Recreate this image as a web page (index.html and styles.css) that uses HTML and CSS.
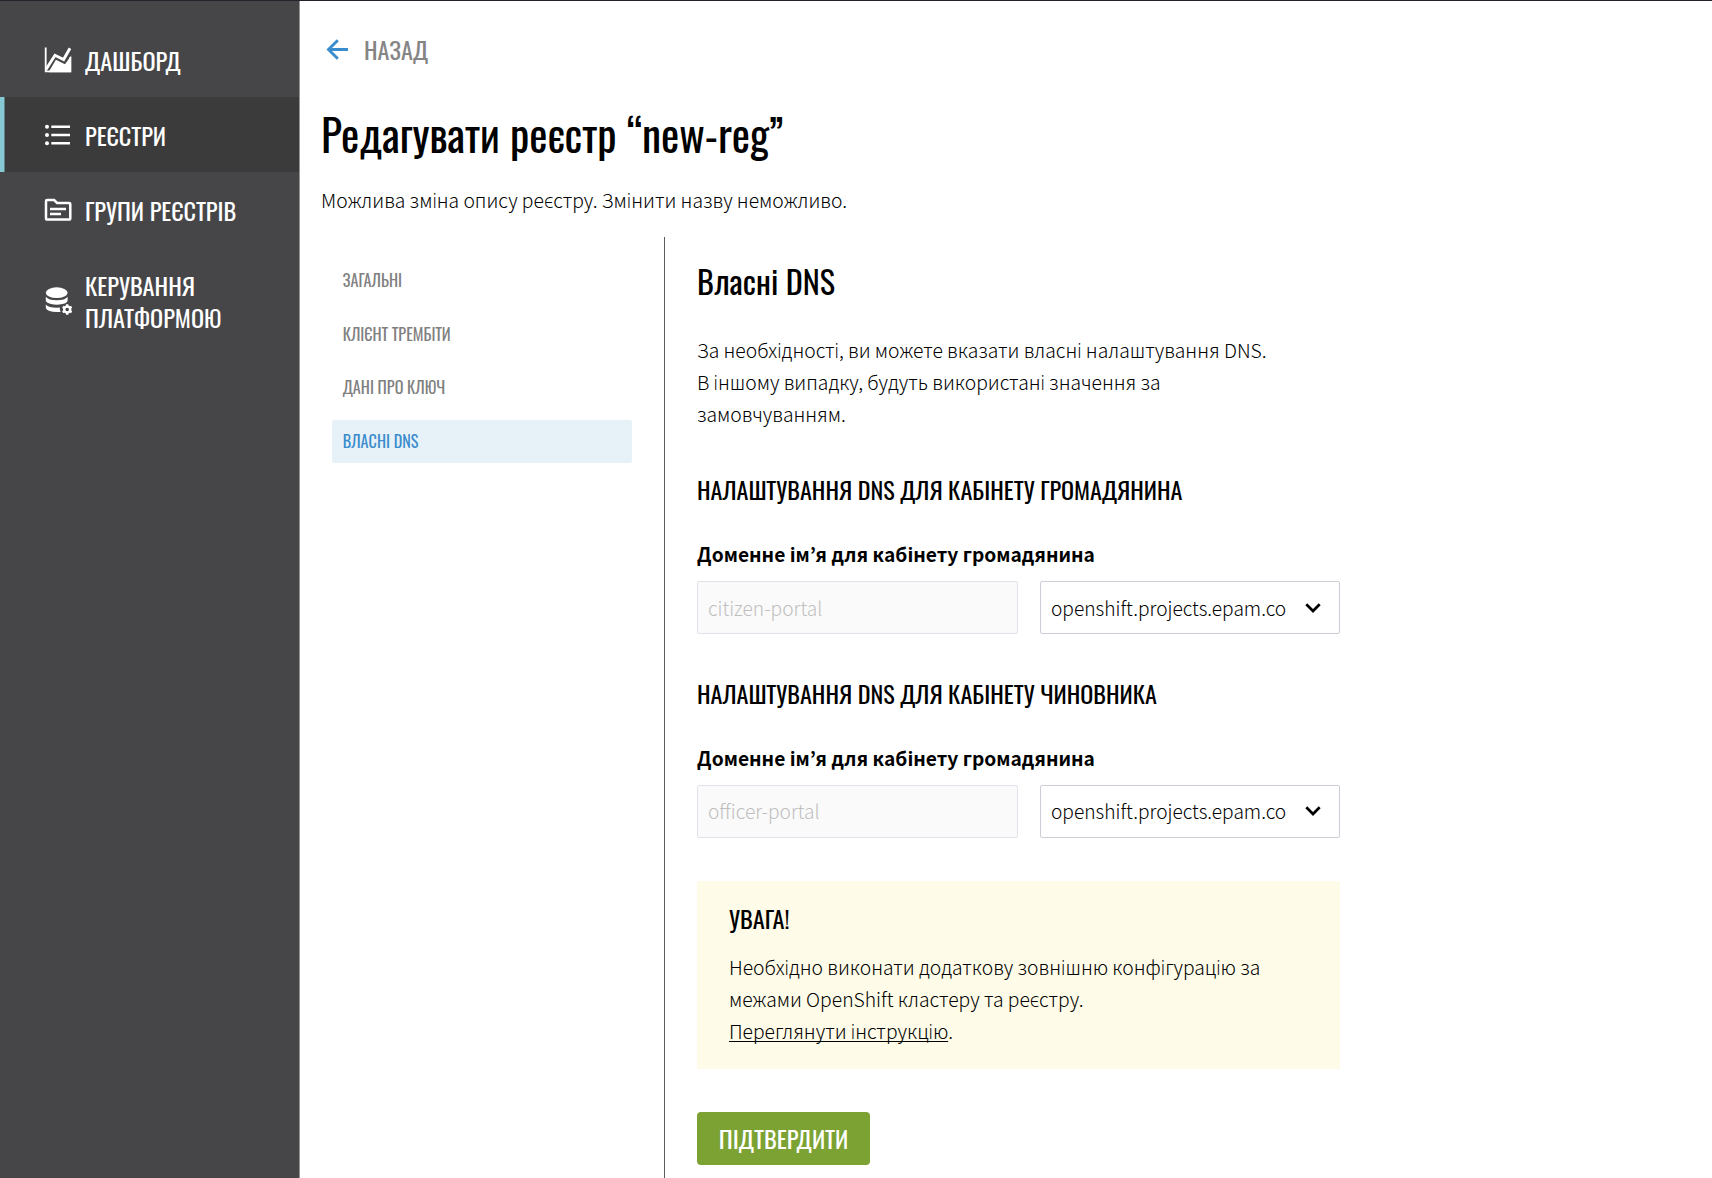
FILE: index.html
```html
<!DOCTYPE html>
<html lang="uk">
<head>
<meta charset="utf-8">
<title>Редагувати реєстр</title>
<link rel="stylesheet" href="styles.css">
</head>
<body>
<div class="app">
  <nav class="sidebar">
    <a class="nav-item">
      <svg class="nav-icon" viewBox="0 0 28 28"><path d="M1.7 1.5V25.4H26.3V11" fill="none" stroke="#fff" stroke-width="1.8"/><path d="M2 23.6 11 9.3l8.6 4.2L26 2.2" fill="none" stroke="#fff" stroke-width="2.9"/><path d="M4.7 26 11.9 13.8l9.1 4.4L27.2 9.5V26.3H4.7z" fill="#fff"/></svg>
      <span>ДАШБОРД</span>
    </a>
    <a class="nav-item nav-item-active">
      <svg class="nav-icon" viewBox="0 0 28 28" fill="#fff"><circle cx="3" cy="5.8" r="2"/><circle cx="3" cy="14" r="2"/><circle cx="3" cy="22.2" r="2"/><path d="M7.3 4.6H26v2.4H7.3zM7.3 12.8H26v2.4H7.3zM7.3 21H26v2.4H7.3z"/></svg>
      <span>РЕЄСТРИ</span>
    </a>
    <a class="nav-item">
      <svg class="nav-icon" viewBox="0 0 28 28" fill="none" stroke="#fff" stroke-width="2.5"><path d="M2 5.2Q2 4 3.2 4h6.9l3 2.9h12Q26.3 6.9 26.3 8.1V22.2Q26.3 23.5 25 23.5H3.2Q2 23.5 2 22.2Z"/><path d="M6 13H22M6 18H17"/></svg>
      <span>ГРУПИ РЕЄСТРІВ</span>
    </a>
    <a class="nav-item">
      <svg class="nav-icon" viewBox="0 0 28 28" fill="#fff"><ellipse cx="12.7" cy="5.7" rx="10.9" ry="5.4"/><path d="M1.8 9.8Q4.5 13.3 12.7 13.3T23.6 9.8V13.5Q23.3 16 18.5 17Q12.5 18.4 7 17Q1.8 15.6 1.8 13.5ZM1.8 17.5Q5 21.2 15.8 20.6Q15.6 22.8 16.6 24.9Q9.5 25.6 4.8 23.7Q1.8 22.5 1.8 20.8Z"/><circle cx="23.2" cy="22.5" r="3" fill="none" stroke="#fff" stroke-width="2.4"/><path d="M23.2 19.5V17.3M23.2 25.5v2.2M20.6 21l-1.9-1.1M25.8 24l1.9 1.1M20.6 24l-1.9 1.1M25.8 21l1.9-1.1" stroke="#fff" stroke-width="2.4"/></svg>
      <span>КЕРУВАННЯ ПЛАТФОРМОЮ</span>
    </a>
  </nav>
  <main class="main">
    <a class="back">
      <svg class="back-icon" viewBox="0 0 24 24" fill="none" stroke="#3a8ccc" stroke-width="3"><path d="M23 12H3M12.3 2.3 2.6 12l9.7 9.7"/></svg>
      <span>НАЗАД</span>
    </a>
    <h1 class="title">Редагувати реєстр “new-reg”</h1>
    <p class="subtitle">Можлива зміна опису реєстру. Змінити назву неможливо.</p>
    <div class="columns">
      <ul class="tabs">
        <li class="tab">ЗАГАЛЬНІ</li>
        <li class="tab">КЛІЄНТ ТРЕМБІТИ</li>
        <li class="tab">ДАНІ ПРО КЛЮЧ</li>
        <li class="tab tab-active">ВЛАСНІ DNS</li>
      </ul>
      <section class="form">
        <h2 class="form-title">Власні DNS</h2>
        <p class="form-text">За необхідності, ви можете вказати власні налаштування DNS.<br>В іншому випадку, будуть використані значення за<br>замовчуванням.</p>

        <h3 class="section-title">НАЛАШТУВАННЯ DNS ДЛЯ КАБІНЕТУ ГРОМАДЯНИНА</h3>
        <div class="label">Доменне ім’я для кабінету громадянина</div>
        <div class="fields">
          <div class="input">citizen-portal</div>
          <div class="select"><span>openshift.projects.epam.co</span><svg class="chevron" viewBox="0 0 16 10"><path d="M1.3 1.3 8 8l6.7-6.7" fill="none" stroke="#000" stroke-width="2.7"/></svg></div>
        </div>

        <h3 class="section-title">НАЛАШТУВАННЯ DNS ДЛЯ КАБІНЕТУ ЧИНОВНИКА</h3>
        <div class="label">Доменне ім’я для кабінету громадянина</div>
        <div class="fields">
          <div class="input">officer-portal</div>
          <div class="select"><span>openshift.projects.epam.co</span><svg class="chevron" viewBox="0 0 16 10"><path d="M1.3 1.3 8 8l6.7-6.7" fill="none" stroke="#000" stroke-width="2.7"/></svg></div>
        </div>

        <div class="notice">
          <h3 class="notice-title">УВАГА!</h3>
          <p class="notice-text">Необхідно виконати додаткову зовнішню конфігурацію за<br>межами OpenShift кластеру та реєстру.<br><a class="link">Переглянути інструкцію</a>.</p>
        </div>
        <button class="submit">ПІДТВЕРДИТИ</button>
      </section>
    </div>
  </main>
</div>
</body>
</html>
```
FILE: styles.css
```css
* { box-sizing: border-box; }
body {
  margin: 0;
  background: #fff;
  color: #000;
  font: 300 19.3px/32.1px "Noto Sans CJK KR", "Open Sans", sans-serif;
}
h1, h2, h3, p, ul { margin: 0; padding: 0; list-style: none; }
.app {
  display: flex;
  height: 1178px;
  overflow: hidden;
  border-top: 1px solid #23242b;
}

.sidebar {
  width: 300px;
  flex: none;
  padding-top: 21px;
  border-right: 1px solid #959596;
  background: #464648;
  color: #fff;
  font: 400 24.3px/32.1px Oswald, "Open Sans", sans-serif;
}
.nav-item {
  display: flex;
  align-items: center;
  gap: 13.5px;
  min-height: 75.1px;
  padding: 22px 55px 20.8px 43.5px;
}
.nav-item-active {
  background: #3b3b3b;
  box-shadow: inset 4.5px 0 #86c9d4;
}
.nav-icon { width: 28px; height: 28px; flex: none; }

.main { flex: 1; padding-left: 21px; }
.back {
  display: flex;
  align-items: center;
  gap: 15px;
  margin-top: 32px;
  padding-left: 5px;
  color: #858585;
  font: 400 24.2px/32px Oswald, "Open Sans", sans-serif;
}
.back-icon { width: 23px; height: 23px; }
.title {
  margin-top: 39.2px;
  font: 400 43.4px/60px Oswald, "Open Sans", sans-serif;
}
.subtitle { margin-top: 19.4px; }
.columns { display: flex; margin-top: 21.3px; }
.tabs {
  width: 343.2px;
  flex: none;
  display: flex;
  flex-direction: column;
  gap: 10.8px;
  padding: 22.1px 32.2px 0 11px;
}
.tab {
  height: 42.8px;
  padding-left: 10.7px;
  border-radius: 2px;
  color: #808080;
  font: 400 16.2px/42.8px Oswald, "Open Sans", sans-serif;
}
.tab-active { background: #e7f2f8; color: #3a8ccc; }

.form {
  width: 677px;
  height: 941px;
  padding: 22.2px 0 0 31.8px;
  border-left: 1px solid #5c5c5c;
}
.form-title { font: 400 32.3px/43px Oswald, "Open Sans", sans-serif; }
.form-text { margin-top: 32px; }
.section-title {
  margin-top: 42.8px;
  font: 400 24.2px/32px Oswald, "Open Sans", sans-serif;
}
.label { margin-top: 32.6px; font-weight: 700; font-size: 19.2px; line-height: 32px; }
.fields { display: flex; justify-content: space-between; width: 643.2px; margin-top: 11px; }
.input, .select {
  display: flex;
  align-items: center;
  height: 53.5px;
  padding: 0 10px;
  border: 1px solid #cdcdd8;
  border-radius: 2px;
  font-size: 19.15px;
}
.input { width: 321.5px; background: #fafafa; border-color: #e2e2ea; color: #bfbfbf; }
.select { width: 300.2px; justify-content: space-between; padding-right: 18px; }
.chevron { width: 16px; height: 10px; }

.notice {
  width: 643.2px;
  margin-top: 42.8px;
  padding: 21.4px 32px 22px;
  background: #fefbe8;
}
.notice-title { font: 400 24.4px/32px Oswald, "Open Sans", sans-serif; }
.notice-text { margin-top: 16.3px; }
.link {
  text-decoration: underline;
  text-decoration-thickness: 1px;
  text-underline-offset: 2px;
  text-decoration-skip-ink: none;
}
.submit {
  display: block;
  width: 173px;
  height: 53.5px;
  margin-top: 43px;
  padding: 0;
  border: 0;
  border-radius: 4px;
  background: #7ba232;
  color: #fff;
  font: 400 24.4px/53.5px Oswald, "Open Sans", sans-serif;
}
```
